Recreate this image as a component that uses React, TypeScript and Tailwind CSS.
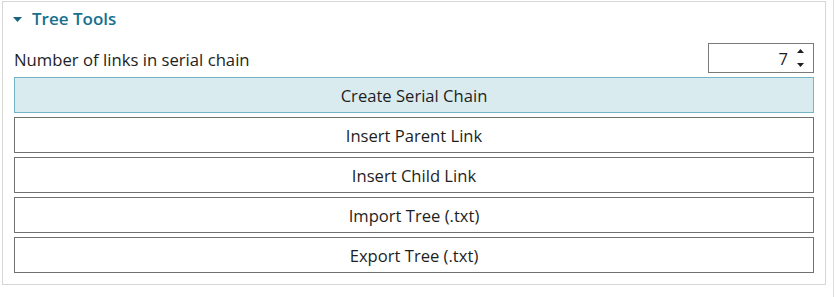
import React from "react";

const buttons = [
  "Insert Parent Link",
  "Insert Child Link",
  "Import Tree (.txt)",
  "Export Tree (.txt)",
];

export default function App() {
  return (
    <div
      className="w-[834px] h-[297px] bg-white relative text-[#1e1e1e]"
      style={{ fontFamily: '"Segoe UI", "Open Sans", "Noto Sans", sans-serif' }}
    >
      <div className="absolute right-0 top-0 h-full w-px bg-[#dcdcdc]" />
      <div className="pt-[1px] pl-[2px]">
        <div className="w-[824px] h-[284px] border border-[#d6d6d6] flex flex-col">
          <div className="h-[33px] flex items-center pl-[10px] gap-[10px]">
            <svg width="9" height="5" viewBox="0 0 9 5" className="mt-[1px]">
              <polygon points="0,0 9,0 4.5,5" fill="#17647e" />
            </svg>
            <span className="text-[17px] font-semibold text-[#17708e] leading-none">Tree Tools</span>
          </div>
          <div className="px-[11px] flex flex-col">
            <div className="flex items-center justify-between mt-[8px] h-[30px]">
              <span className="text-[16.7px] leading-none mt-[5px]">Number of links in serial chain</span>
              <div className="w-[106px] h-[30px] border border-[#7a7a7a] flex items-center justify-end pr-[9px]">
                <span className="text-[16.6px] leading-none mr-[9px] mt-[2px]">7</span>
                <div className="flex flex-col gap-[10px]">
                  <svg width="7" height="4" viewBox="0 0 7 4">
                    <polygon points="3.5,0 7,4 0,4" fill="#1e1e1e" />
                  </svg>
                  <svg width="7" height="4" viewBox="0 0 7 4">
                    <polygon points="0,0 7,0 3.5,4" fill="#1e1e1e" />
                  </svg>
                </div>
              </div>
            </div>
            <div className="flex flex-col gap-[4px] mt-[4px]">
              <button className="h-[36px] w-full bg-[#daebf0] border border-[#72b5c6] text-[16.6px] leading-none pt-[2px] flex items-center justify-center">
                Create Serial Chain
              </button>
              {buttons.map((b) => (
                <button
                  key={b}
                  className="h-[36px] w-full bg-white border border-[#707070] text-[16.6px] leading-none pt-[2px] flex items-center justify-center"
                >
                  {b}
                </button>
              ))}
            </div>
          </div>
        </div>
      </div>
    </div>
  );
}
